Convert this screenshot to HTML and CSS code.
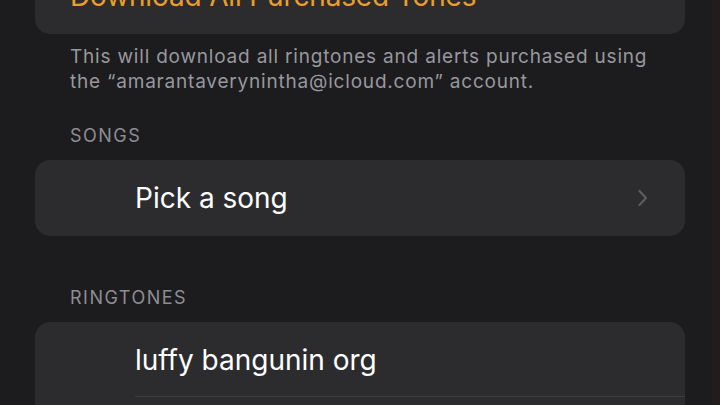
FILE: index.html
```html
<!DOCTYPE html>
<html lang="en">

<head>
    <meta charset="UTF-8" />
    <meta name="viewport" content="width=device-width, initial-scale=1.0" />
    <title>Ringtone</title>
    <link rel="stylesheet" href="styles.css">
</head>

<body>
    <div class="screen">
        <!-- Store section -->
        <div class="card card-top">
            <div class="row">
                <span class="action">Download All Purchased Tones</span>
            </div>
        </div>
        <p class="footnote">This will download all ringtones and alerts purchased using<br>the “amarantaverynintha@icloud.com” account.</p>

        <!-- Songs -->
        <h3 class="section-title">SONGS</h3>
        <div class="card">
            <div class="row indented">
                <span class="label">Pick a song</span>
                <svg class="chevron" width="11" height="18" viewBox="0 0 11 18">
                    <path d="M2.5 2 L9 9 L2.5 16" fill="none" stroke="#5c5c61" stroke-width="2.2" stroke-linecap="round" stroke-linejoin="round" />
                </svg>
            </div>
        </div>

        <!-- Ringtones -->
        <h3 class="section-title spaced">RINGTONES</h3>
        <div class="card">
            <div class="row indented divided">
                <span class="label">luffy bangunin org</span>
            </div>
            <div class="row indented"></div>
        </div>
    </div>
</body>

</html>
```

FILE: styles.css
```css
body {
    margin: 0;
    width: 720px;
    height: 405px;
    overflow: hidden;
    font-family: Inter, "Noto Sans", sans-serif;
    background: linear-gradient(to right, #1c1c1e 712px, #221c1c 712px);
    color: #fff;
}

.screen {
    padding: 0 35px 0 35px;
    width: 650px;
}

.card {
    background-color: #2c2c2e;
    border-radius: 15px;
    overflow: hidden;
}

.card-top {
    margin-top: -42px;
}

.row {
    height: 76px;
    display: flex;
    align-items: center;
    padding: 0 35px;
    box-sizing: border-box;
}

.row.indented {
    padding-left: 100px;
    padding-right: 37px;
    justify-content: space-between;
}

.row.divided {
    height: 75px;
    background-image: linear-gradient(#3d3d40, #3d3d40);
    background-size: calc(100% - 100px) 1px;
    background-position: 100px 100%;
    background-repeat: no-repeat;
}

.action {
    color: #eb9e2c;
    font-size: 28px;
    letter-spacing: -0.15px;
}

.label {
    font-size: 28px;
}

.footnote {
    margin: 10px 0 0 0;
    padding: 0 35px;
    font-size: 19px;
    line-height: 25px;
    color: #98989e;
    letter-spacing: 0.8px;
    white-space: nowrap;
}

.section-title {
    margin: 31px 0 13px 0;
    padding: 0 35px;
    font-size: 18px;
    line-height: 22px;
    font-weight: normal;
    color: #8d8d93;
    letter-spacing: 1.5px;
}

.section-title.spaced {
    margin-top: 51px;
}

.chevron {
    flex: none;
}
```
